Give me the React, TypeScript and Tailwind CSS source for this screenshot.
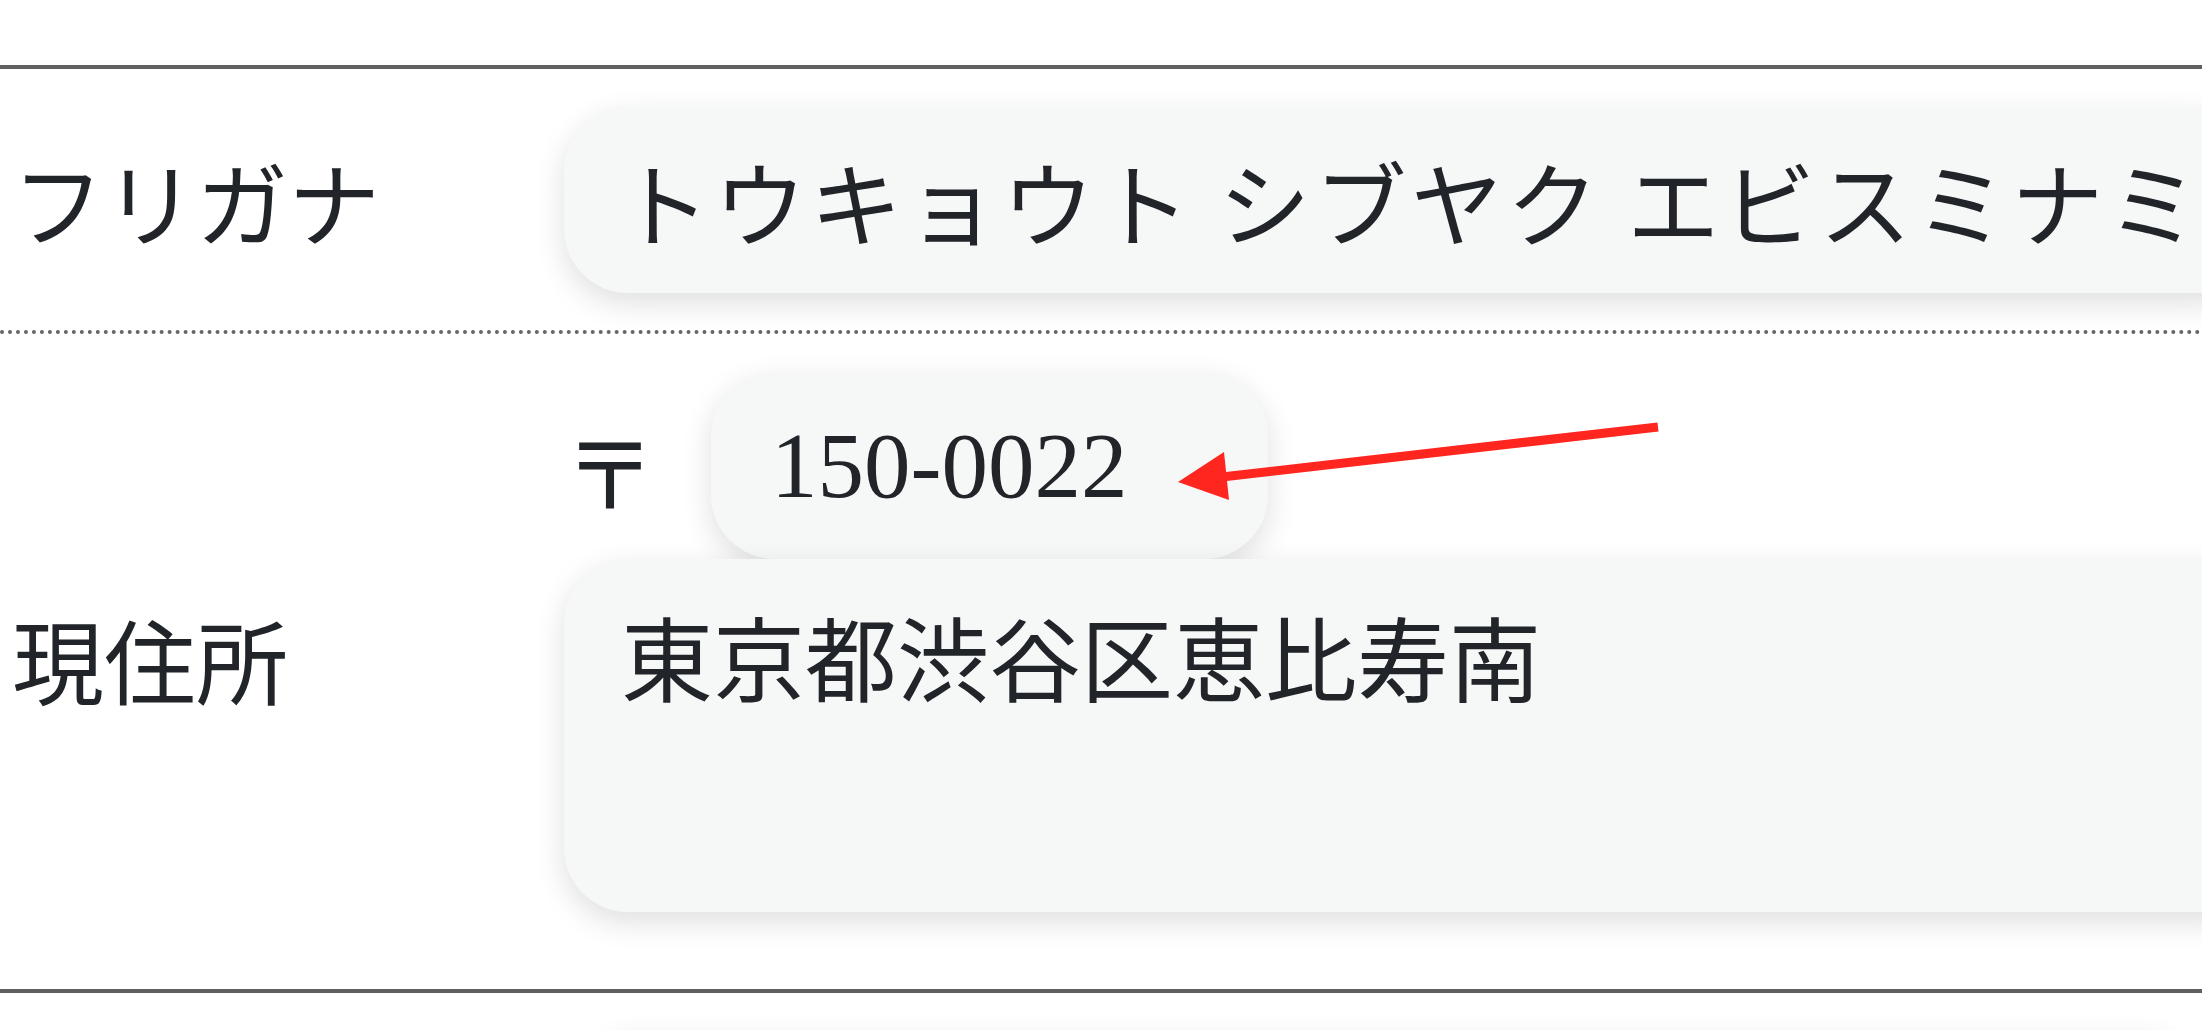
import React from "react";

const cjk = { fontFamily: '"Noto Sans CJK JP", "Noto Sans", sans-serif' };

function Field({ children, className }: { children: React.ReactNode; className: string }) {
  return (
    <div
      className={
        "bg-[#f5f8f7] rounded-[64px] shadow-[0_10px_30px_rgba(0,0,0,0.13)] text-[#212529] " + className
      }
    >
      {children}
    </div>
  );
}

export default function App() {
  return (
    <div className="relative w-[2202px] h-[1030px] overflow-hidden bg-white pt-[65px]" style={cjk}>
      {/* フリガナ */}
      <div className="border-t-4 border-[#606060]">
        <div className="flex items-center h-[265px] pl-[12px] border-b-4 border-dotted border-[#666]">
          <div className="w-[552px] shrink-0 text-[92px] leading-none text-[#212529]">フリガナ</div>
          <Field className="w-[1700px] shrink-0 h-[186px] flex items-center pl-[54px]">
            <span className="text-[92px] leading-none tracking-[4px] whitespace-nowrap">
              トウキョウト シブヤク エビスミナミ
            </span>
          </Field>
        </div>

        {/* 現住所 */}
        <div className="flex items-center pl-[12px] pt-[38px] pb-[77px] border-b-4 border-[#606060]">
          <div className="w-[552px] shrink-0 text-[92px] leading-none text-[#212529] mt-[32px]">現住所</div>
          <div className="flex flex-col">
            <div className="flex items-center">
              <span className="text-[92px] leading-none text-[#212529] mr-[55px] mt-[6px]">〒</span>
              <Field className="w-[557px] h-[187px] flex items-center pl-[60px]">
                <span
                  className="text-[93px] leading-none"
                  style={{ fontFamily: '"Liberation Serif", "Times New Roman", serif' }}
                >
                  150-0022
                </span>
              </Field>
            </div>
            <Field className="w-[1700px] h-[353px] pl-[57px] pt-[50px]">
              <span className="text-[92px] leading-none whitespace-nowrap">東京都渋谷区恵比寿南</span>
            </Field>
          </div>
        </div>

        {/* next row, only its shadow shows */}
        <div className="flex pl-[576px] pt-[39px]">
          <Field className="w-[1700px] h-[186px]">
            <span />
          </Field>
        </div>
      </div>

      <svg className="absolute left-0 top-0 pointer-events-none" width="2202" height="1030">
        <line x1="1658" y1="427" x2="1222" y2="477" stroke="#ff2620" strokeWidth="9" />
        <polygon points="1178,482 1224,452 1229,500" fill="#ff2620" />
      </svg>
    </div>
  );
}
